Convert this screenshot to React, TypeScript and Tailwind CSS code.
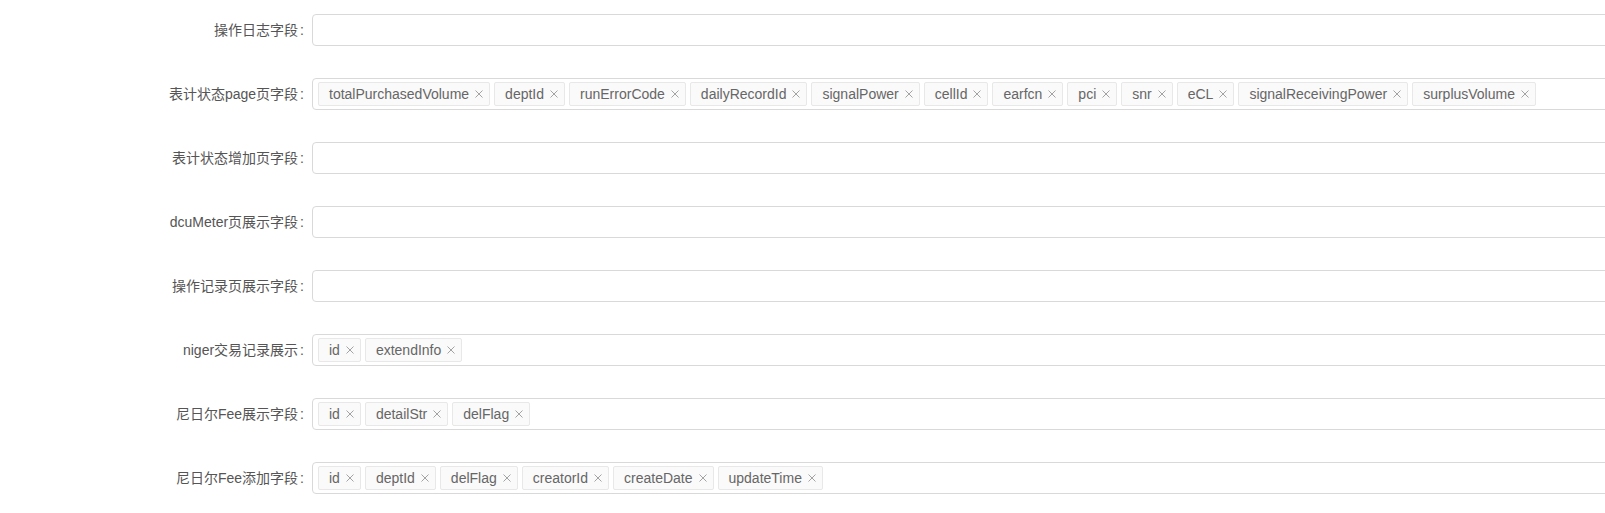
const rows: { label: string; tags: string[] }[] = [
  { label: "操作日志字段", tags: [] },
  {
    label: "表计状态page页字段",
    tags: [
      "totalPurchasedVolume",
      "deptId",
      "runErrorCode",
      "dailyRecordId",
      "signalPower",
      "cellId",
      "earfcn",
      "pci",
      "snr",
      "eCL",
      "signalReceivingPower",
      "surplusVolume",
    ],
  },
  { label: "表计状态增加页字段", tags: [] },
  { label: "dcuMeter页展示字段", tags: [] },
  { label: "操作记录页展示字段", tags: [] },
  { label: "niger交易记录展示", tags: ["id", "extendInfo"] },
  { label: "尼日尔Fee展示字段", tags: ["id", "detailStr", "delFlag"] },
  { label: "尼日尔Fee添加字段", tags: ["id", "deptId", "delFlag", "creatorId", "createDate", "updateTime"] },
];

function CloseIcon() {
  return (
    <svg viewBox="0 0 8 8" className="h-[8px] w-[8px]" fill="none" stroke="currentColor" strokeWidth="0.9">
      <path d="M0.5 0.5 L7.5 7.5 M7.5 0.5 L0.5 7.5" />
    </svg>
  );
}

function Tag({ text }: { text: string }) {
  return (
    <li className="relative mr-[4px] mt-[3px] flex h-[24px] items-center rounded-[2px] border border-[#e8e8e8] bg-[#fafafa] pl-[10px] pr-[20px] text-[14px] leading-[22px] text-[#666]">
      {text}
      <span className="absolute right-[6px] top-[7px] text-[#999]">
        <CloseIcon />
      </span>
    </li>
  );
}

function FieldRow({ label, tags }: { label: string; tags: string[] }) {
  return (
    <div className="flex h-[32px] items-center">
      <label className="w-[312px] shrink-0 pr-[8px] text-right text-[14px] text-[#555]">
        {label}
        <span className="ml-[2px]">:</span>
      </label>
      <div className="h-[32px] w-[1400px] shrink-0 rounded-[4px] border border-[#d9d9d9] bg-white">
        <ul className="flex pl-[5px]">
          {tags.map((t, i) => (
            <Tag key={i} text={t} />
          ))}
        </ul>
      </div>
    </div>
  );
}

export default function App() {
  return (
    <div
      className="h-[513px] w-full overflow-hidden bg-white pt-[14px]"
      style={{ fontFamily: '"Liberation Sans", Arial, "Noto Sans CJK SC", sans-serif' }}
    >
      <div className="flex flex-col gap-[32px]">
        {rows.map((r) => (
          <FieldRow key={r.label} label={r.label} tags={r.tags} />
        ))}
      </div>
    </div>
  );
}
